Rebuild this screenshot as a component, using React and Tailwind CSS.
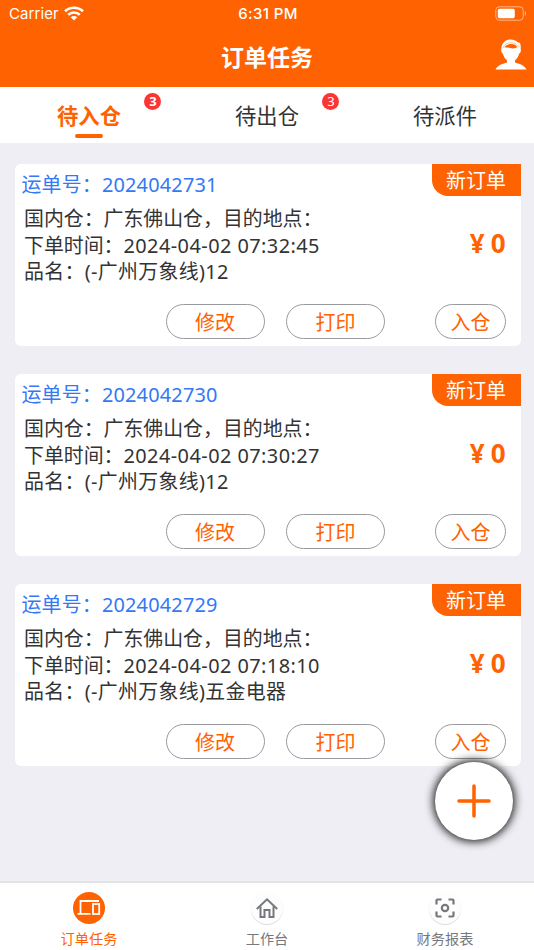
import React, { useState } from "react";

const tabs = [
  { name: "待入仓", count: 3 },
  { name: "待出仓", count: 3 },
  { name: "待派件", count: 0 },
];

const orders = [
  { no: "2024042731", time: "2024-04-02 07:32:45", goods: "(-广州万象线)12" },
  { no: "2024042730", time: "2024-04-02 07:30:27", goods: "(-广州万象线)12" },
  { no: "2024042729", time: "2024-04-02 07:18:10", goods: "(-广州万象线)五金电器" },
];

const WifiIcon = () => (
  <svg width="20" height="15" viewBox="0 0 20 15" fill="none" stroke="white" strokeWidth="2.6">
    <path d="M1 5.2C6 .6 14 .6 19 5.2" />
    <path d="M4.2 8.8C7.4 5.8 12.6 5.8 15.8 8.8" />
    <path d="M10 14.4L6.7 11.2C8.6 9.6 11.4 9.6 13.3 11.2Z" fill="white" stroke="none" />
  </svg>
);

const BatteryIcon = () => (
  <svg width="32" height="15" viewBox="0 0 32 15" fill="none">
    <rect x="0.8" y="0.8" width="27.4" height="13.4" rx="3.5" stroke="#ffb58a" strokeWidth="1" />
    <rect x="2.8" y="2.8" width="17" height="9.4" rx="1.6" fill="white" />
    <path d="M29.8 5c1.6.8 1.6 4.2 0 5z" fill="#ffb58a" />
  </svg>
);

const UserIcon = () => (
  <svg width="32" height="31" viewBox="0 0 32 31">
    <path
      d="M15.500.500C10.500.500 6.800 4 6.400 9.200c-.5 2.600.1 4.600 1.400 5.300.7 3 2.200 5.300 4.200 6.700v2.300C8 24.800 2.500 26 .5 30.500h31C29.500 26 24 24.800 20 23.500v-2.300c2-1.400 3.500-3.700 4.200-6.700 1.500-.8 2-2.800 1.500-4.600.2-2.500 0-4.500-1-6.200l-1.600-.2C21 1.500 18.500.5 15.500.5z"
      fill="white"
    />
    <path d="M7.800 9.200C9 5.500 13 3.300 17 3.700c2.500.2 5.500 1.500 7.400 4.500" fill="none" stroke="#ff6200" strokeWidth="0.400" />
    <path d="M9.300 8.300c2-2.600 4.700-3.300 7.200-3.200 2.500.1 4.700 1.100 5.900 3.100-1.400.7-2.800 1.100-4.200 1.200-2.300.1-3.700-.7-5.400-.9-1.300-.2-2.400.1-3.500-.2z" fill="#ff6200" />
  </svg>
);

const DevicesIcon = () => (
  <svg width="24" height="18" viewBox="0 0 24 18" fill="none" stroke="white" strokeWidth="1.800">
    <path d="M22 2H3.500v12M.5 14.800h13" />
    <rect x="16" y="5" width="6.200" height="10" />
  </svg>
);

const HomeIcon = () => (
  <svg width="24" height="22" viewBox="0 0 24 22" fill="none" stroke="#75797e" strokeWidth="2">
    <path d="M1.800 12L12 2.300 22.200 12" />
    <path d="M5.500 9.500V20h4v-7h5v7h4V9.500" />
  </svg>
);

const ScanIcon = () => (
  <svg width="20" height="20" viewBox="0 0 20 20" fill="none" stroke="#75797e" strokeWidth="2.200">
    <path d="M1.500 6.500v-4a1 1 0 0 1 1-1h4M13.500 1.500h4a1 1 0 0 1 1 1v4M18.500 13.500v4a1 1 0 0 1-1 1h-4M6.500 18.500h-4a1 1 0 0 1-1-1v-4" />
    <circle cx="10" cy="10" r="3.200" />
  </svg>
);

const navItems = [
  { name: "订单任务", icon: <DevicesIcon /> },
  { name: "工作台", icon: <HomeIcon /> },
  { name: "财务报表", icon: <ScanIcon /> },
];

const OrderCard = ({ order }) => (
  <div className="flex h-[182.500px] flex-col rounded-md bg-white">
    <div className="flex h-[41.500px] justify-between">
      <div className="pl-[6.500px] pt-[6px] text-[19.900px] leading-[30px] tracking-[0.200px] text-[#3478f6]">
        运单号：{order.no}
      </div>
      <div className="h-8 w-[89px] rounded-bl-[16px] bg-[#ff6200] text-center text-[20px] leading-[34px] text-white">
        新订单
      </div>
    </div>
    <div className="flex items-center justify-between pl-[9px] pr-[15px]">
      <div className="pt-px text-[19.900px] leading-[26.700px] text-[#333]">
        <p>国内仓：广东佛山仓，目的地点：</p>
        <p>
          下单时间：<span className="tracking-[0.450px]">{order.time}</span>
        </p>
        <p className="tracking-[0.350px]">品名：{order.goods}</p>
      </div>
      <div className="-mt-[6px] flex gap-[6px] text-[26px] font-bold leading-[26px] text-[#ff6200]">
        <span>¥</span>
        <span>0</span>
      </div>
    </div>
    <div className="mt-[18px] flex justify-end pr-[14.500px] text-[20px] leading-[35px] text-[#ff6200]">
      <button className="mr-[21.500px] flex h-[35px] w-[99px] justify-center rounded-full border border-[#999a9f]">修改</button>
      <button className="mr-[50px] flex h-[35px] w-[99px] justify-center rounded-full border border-[#999a9f]">打印</button>
      <button className="flex h-[35px] w-[71px] justify-center rounded-full border border-[#999a9f]">入仓</button>
    </div>
  </div>
);

const App = () => {
  const [activeTab, setActiveTab] = useState(0);
  const [activeNav, setActiveNav] = useState(0);

  return (
    <div className="relative flex h-[950px] w-[534px] flex-col overflow-hidden bg-[#efeef4] font-['Noto_Sans','Noto_Sans_CJK_SC',sans-serif]">
      <header className="h-[87px] bg-[#ff6200] text-white">
        <div className="grid h-[27px] grid-cols-3 items-center pl-[9px] pr-[7px] font-['Inter',sans-serif] text-[15px]">
          <div className="flex items-center gap-[5px] tracking-[0.100px]">
            <span className="pt-[2px]">Carrier</span> <WifiIcon />
          </div>
          <div className="pt-[2px] text-center font-medium tracking-[0.350px]">6:31 PM</div>
          <div className="flex justify-end">
            <BatteryIcon />
          </div>
        </div>
        <div className="grid grid-cols-[1fr_auto_1fr] items-center pl-[7px] pr-[7px]">
          <span />
          <h1 className="text-[23px] font-bold leading-[60px]">订单任务</h1>
          <div className="mb-[6px] flex justify-end">
            <UserIcon />
          </div>
        </div>
      </header>

      <div className="grid h-[55.500px] grid-cols-3 bg-white">
        {tabs.map((tab, i) => (
          <div
            key={tab.name}
            className="relative flex cursor-pointer flex-col items-center pt-[13px]"
            onClick={() => setActiveTab(i)}
          >
            <span className={`text-[21.300px] leading-8 ${activeTab === i ? "font-bold text-[#ff6200]" : "text-[#333]"}`}>
              {tab.name}
            </span>
            {activeTab === i && <span className="mt-[2px] h-1 w-7 rounded-full bg-[#ff6200]" />}
            {tab.count > 0 && (
              <span
                className={`absolute left-[144.400px] top-[6px] h-[17px] w-[17px] rounded-full bg-[#fb3434] text-center text-[13px] leading-[17px] text-white ${activeTab === i ? "font-bold" : ""}`}
              >
                {tab.count}
              </span>
            )}
          </div>
        ))}
      </div>

      <main className="flex flex-1 flex-col gap-[27.500px] pl-[15px] pr-[13.500px] pt-[21px]">
        {orders.map((order) => (
          <OrderCard key={order.no} order={order} />
        ))}
      </main>

      <button className="absolute left-[435px] top-[762px] flex h-[78px] w-[78px] items-center justify-center rounded-full bg-white shadow-[0_0_9px_2px_#222]">
        <svg width="34" height="34" viewBox="0 0 34 34" stroke="#ff6200" strokeWidth="3.500" strokeLinecap="round">
          <path d="M17 2v30M2 17h30" />
        </svg>
      </button>

      <nav className="grid h-[69px] grid-cols-3 border-t-2 border-[#e3e3e3] bg-white">
        {navItems.map((item, i) => (
          <div
            key={item.name}
            className={`flex cursor-pointer flex-col items-center pt-[9px] ${activeNav === i ? "text-[#ff6200]" : "text-[#75797e]"}`}
            onClick={() => setActiveNav(i)}
          >
            <span
              className={`flex h-8 w-8 items-center justify-center rounded-full ${activeNav === i ? "bg-[#ff6200]" : "bg-[#fdfdfd] shadow-[0_1px_1px_#ddd]"}`}
            >
              {item.icon}
            </span>
            <span className="mt-[5px] text-[14.200px] leading-5">{item.name}</span>
          </div>
        ))}
      </nav>
    </div>
  );
};

export default App;
